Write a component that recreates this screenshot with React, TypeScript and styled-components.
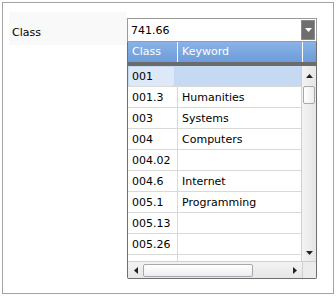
import * as React from "react"
import styled, { createGlobalStyle } from "styled-components"

const GlobalStyle = createGlobalStyle`
    html, body {
        margin: 0;
        padding: 0;
        background: #ffffff;
    }
    body {
        font-family: "DejaVu Sans", Verdana, sans-serif;
        font-size: 11px;
        color: #000000;
    }
`

const Frame = styled.div`
    box-sizing: border-box;
    margin: 2px 0 0 2px;
    width: 332px;
    height: 292px;
    border: 1px solid #a3a3a3;
    padding: 9px 0 0 6px;
    display: flex;
    align-items: flex-start;
`

const LabelCell = styled.div`
    box-sizing: border-box;
    width: 118px;
    height: 33px;
    padding: 14px 0 0 3px;
    line-height: 13px;
    background: #f9f9f9;
`

const ComboColumn = styled.div`
    margin-top: 6px;
    width: 190px;
    display: flex;
    flex-direction: column;
`

const Combo = styled.div`
    box-sizing: border-box;
    height: 24px;
    border: 1px solid #9a9a9a;
    background: #ffffff;
    display: flex;
    align-items: center;
    padding: 1px 1px 1px 3px;
`

const ComboText = styled.div`
    flex: 1;
    line-height: 13px;
    padding-top: 1px;
`

const ComboButton = styled.div`
    box-sizing: border-box;
    width: 14px;
    height: 20px;
    background: #6e6e6e;
    border: 1px solid #8a8a8a;
    display: flex;
    align-items: center;
    justify-content: center;
`

const Popup = styled.div`
    box-sizing: border-box;
    width: 190px;
    border: 1px solid #6f6f6f;
    border-top: none;
    border-radius: 0 0 2px 2px;
    background: #ffffff;
    display: flex;
    flex-direction: column;
`

const HeaderRow = styled.div`
    height: 20px;
    display: flex;
    background: linear-gradient(#8ab2e6, #6c9cda);
`

const HeaderCell = styled.div<{ $w: number }>`
    box-sizing: border-box;
    width: ${(p) => p.$w}px;
    flex: none;
    border-right: 1px solid #ffffff;
    padding-left: 4px;
    color: #ffffff;
    line-height: 19px;
    &:last-child {
        border-right: none;
        flex: 1;
    }
`

const DarkBar = styled.div`
    height: 4px;
    background: #6b6b6b;
`

const Body = styled.div`
    height: 195px;
    display: flex;
`

const Rows = styled.div`
    width: 174px;
    overflow: hidden;
`

const Row = styled.div<{ $selected?: boolean }>`
    box-sizing: border-box;
    height: 21px;
    display: flex;
    border-bottom: 1px solid #d9d9d9;
    background: ${(p) => (p.$selected ? "#c5daf2" : "#ffffff")};
`

const Cell = styled.div<{ $w?: number }>`
    box-sizing: border-box;
    width: ${(p) => (p.$w ? `${p.$w}px` : "auto")};
    flex: ${(p) => (p.$w ? "none" : "1")};
    border-right: 1px solid #d9d9d9;
    padding: 2px 0 0 4px;
    line-height: 18px;
    &:last-child {
        border-right: none;
    }
`

const FocusBox = styled.div`
    margin: -1px 3px 0 -3px;
    height: 19px;
    padding: 1px 0 0 3px;
    box-sizing: border-box;
    border-radius: 2px;
    background: #dde9f8;
    line-height: 18px;
`

const VScroll = styled.div`
    box-sizing: border-box;
    width: 15px;
    border-left: 1px solid #d0d0d0;
    background: linear-gradient(90deg, #f3f3f3, #e6e6e6);
    display: flex;
    flex-direction: column;
    align-items: center;
`

const ArrowBox = styled.div<{ $h: number }>`
    height: ${(p) => p.$h}px;
    width: 100%;
    display: flex;
    align-items: center;
    justify-content: center;
    flex: none;
`

const VThumb = styled.div`
    box-sizing: border-box;
    width: 12px;
    height: 18px;
    border: 1px solid #a8a8a8;
    border-radius: 2px;
    background: linear-gradient(90deg, #ffffff, #e9edf2);
`

const Spacer = styled.div`
    flex: 1;
`

const HScrollRow = styled.div`
    height: 16px;
    display: flex;
    border-top: 1px solid #d0d0d0;
`

const HScroll = styled.div`
    box-sizing: border-box;
    width: 174px;
    background: linear-gradient(#f3f3f3, #e6e6e6);
    display: flex;
    align-items: center;
`

const HArrow = styled.div`
    width: 15px;
    height: 100%;
    flex: none;
    display: flex;
    align-items: center;
    justify-content: center;
`

const HThumb = styled.div`
    box-sizing: border-box;
    width: 110px;
    height: 13px;
    border: 1px solid #a8a8a8;
    border-radius: 2px;
    background: linear-gradient(#ffffff, #e9edf2);
`

const Corner = styled.div`
    box-sizing: border-box;
    flex: 1;
    border-left: 1px solid #d0d0d0;
    background: #ececec;
`

const Tri = ({ dir, color = "#222" }: { dir: "up" | "down" | "left" | "right"; color?: string }) => {
    const pts = {
        up: "0,4 7,4 3.5,0",
        down: "0,0 7,0 3.5,4",
        left: "4,0 4,7 0,3.5",
        right: "0,0 0,7 4,3.5",
    }[dir]
    const vertical = dir === "up" || dir === "down"
    return (
        <svg width={vertical ? 7 : 4} height={vertical ? 4 : 7}>
            <polygon points={pts} fill={color} />
        </svg>
    )
}

const rows: [string, string][] = [
    ["001.3", "Humanities"],
    ["003", "Systems"],
    ["004", "Computers"],
    ["004.02", ""],
    ["004.6", "Internet"],
    ["005.1", "Programming"],
    ["005.13", ""],
    ["005.26", ""],
    ["", ""],
]

export default function App() {
    return (
        <>
            <GlobalStyle />
            <Frame>
                <LabelCell>Class</LabelCell>
                <ComboColumn>
                    <Combo>
                        <ComboText>741.66</ComboText>
                        <ComboButton>
                            <Tri dir="down" color="#ffffff" />
                        </ComboButton>
                    </Combo>
                    <Popup>
                        <HeaderRow>
                            <HeaderCell $w={50}>Class</HeaderCell>
                            <HeaderCell $w={125}>Keyword</HeaderCell>
                            <HeaderCell $w={14} />
                        </HeaderRow>
                        <DarkBar />
                        <Body>
                            <Rows>
                                <Row $selected>
                                    <Cell $w={50}>
                                        <FocusBox>001</FocusBox>
                                    </Cell>
                                    <Cell />
                                </Row>
                                {rows.map(([cls, kw], i) => (
                                    <Row key={i}>
                                        <Cell $w={50}>{cls}</Cell>
                                        <Cell>{kw}</Cell>
                                    </Row>
                                ))}
                            </Rows>
                            <VScroll>
                                <ArrowBox $h={20}>
                                    <Tri dir="up" />
                                </ArrowBox>
                                <VThumb />
                                <Spacer />
                                <ArrowBox $h={16}>
                                    <Tri dir="down" />
                                </ArrowBox>
                            </VScroll>
                        </Body>
                        <HScrollRow>
                            <HScroll>
                                <HArrow>
                                    <Tri dir="left" />
                                </HArrow>
                                <HThumb />
                                <Spacer />
                                <HArrow>
                                    <Tri dir="right" />
                                </HArrow>
                            </HScroll>
                            <Corner />
                        </HScrollRow>
                    </Popup>
                </ComboColumn>
            </Frame>
        </>
    )
}
